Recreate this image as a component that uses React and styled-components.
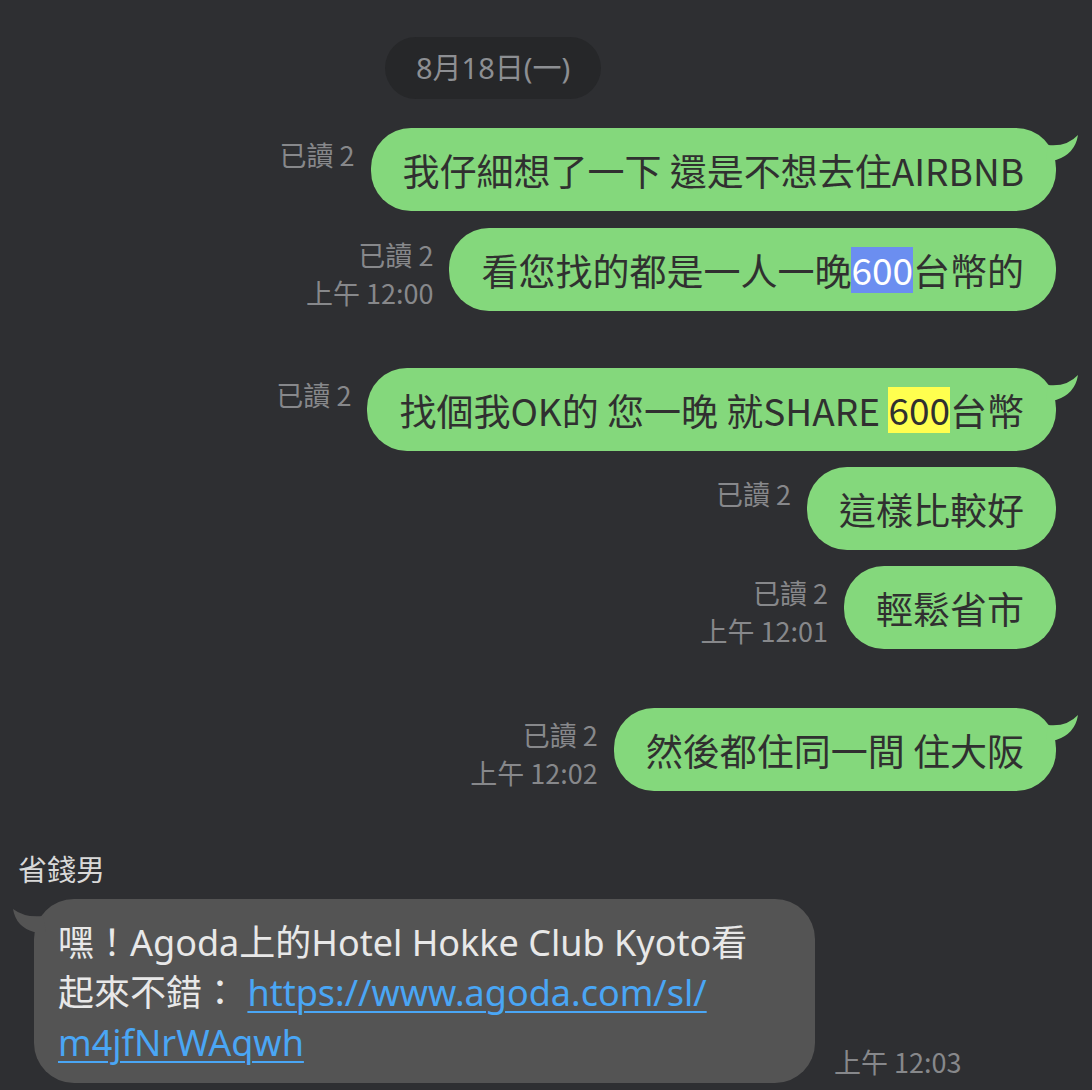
import React from 'react'
import styled, { createGlobalStyle } from 'styled-components'

const cjk = `"Noto Sans CJK TC", "Noto Sans", sans-serif`
const ui = `"Noto Sans", "Noto Sans CJK TC", sans-serif`

const GlobalStyle = createGlobalStyle`
  html, body {
    margin: 0;
    padding: 0;
    background: #2e2f32;
    overflow: hidden;
  }
  * { box-sizing: border-box; }
`

const Chat = styled.div`
  width: 1092px;
  height: 1090px;
  background: #2e2f32;
  padding: 37px 36px 0 0;
  display: flex;
  flex-direction: column;
`

const DatePill = styled.div`
  align-self: flex-start;
  margin-left: 385px;
  height: 62px;
  padding: 0 31px;
  border-radius: 31px;
  background: #262729;
  color: #8d8f93;
  font-family: ${ui};
  font-size: 29px;
  line-height: 62px;
`

const Row = styled.div`
  display: flex;
  justify-content: flex-end;
  align-items: flex-start;
  gap: 16px;
  margin-top: ${(p) => p.$gap}px;
`

const Meta = styled.div`
  margin-top: 8px;
  text-align: right;
  color: #87888b;
  font-family: ${cjk};
  font-size: 27px;
  line-height: 38px;
  white-space: nowrap;
`

const Bubble = styled.div`
  position: relative;
  height: 83px;
  background: #84d87c;
  color: #303030;
  border-radius: 40px;
  padding: 20px 32px;
  font-family: ${cjk};
  font-size: 37px;
  line-height: 44px;
  white-space: nowrap;
`

const Tail = styled.svg`
  position: absolute;
  top: 0;
  ${(p) => (p.$left ? 'left: -22px;' : 'right: -24px;')}
  width: 44px;
  height: 40px;
`

const Mark = styled.span`
  display: inline-block;
  vertical-align: top;
  line-height: 44px;
  height: 46px;
  margin-top: -1px;
  margin-bottom: -1px;
  background: ${(p) => (p.$tone === 'blue' ? '#6b8ef0' : '#ffff4f')};
  color: ${(p) => (p.$tone === 'blue' ? '#ffffff' : '#303030')};
`

const Sender = styled.div`
  margin: 56px 0 0 18px;
  color: #d9d9d9;
  font-family: ${cjk};
  font-size: 29px;
  line-height: 40px;
`

const InRow = styled.div`
  display: flex;
  align-items: flex-end;
  gap: 19px;
  margin: 11px 0 0 34px;
`

const InBubble = styled.div`
  position: relative;
  width: 781px;
  background: #545454;
  color: #e8e8e8;
  border-radius: 40px;
  padding: 19px 24px 15px;
  font-family: ${ui};
  font-size: 36px;
  line-height: 50px;
  white-space: nowrap;
`

const Link = styled.a`
  color: #4aa6f5;
  text-decoration: underline;
  text-underline-offset: 5px;
  text-decoration-thickness: 2px;
`

const InTime = styled(Meta)`
  margin: 0 0 2px;
`

const RightTail = () => (
  <Tail viewBox="0 0 44 40">
    <path d="M12 17 Q31 19 42 7 Q39 26 20 32 L10 32 Z" fill="#84d87c" />
  </Tail>
)

const LeftTail = () => (
  <Tail $left viewBox="0 0 44 40">
    <path d="M31 17 Q13 19 1 10 Q4 28 22 33 L34 33 Z" fill="#545454" />
  </Tail>
)

const messages = [
  { gap: 29, tail: true, meta: ['已讀 2'], text: '我仔細想了一下 還是不想去住AIRBNB' },
  {
    gap: 17,
    meta: ['已讀 2', '上午 12:00'],
    text: (
      <>
        看您找的都是一人一晚<Mark $tone="blue">600</Mark>台幣的
      </>
    ),
  },
  {
    gap: 56,
    tail: true,
    meta: ['已讀 2'],
    text: (
      <>
        找個我OK的 您一晚 就SHARE <Mark $tone="yellow">600</Mark>台幣
      </>
    ),
  },
  { gap: 16, meta: ['已讀 2'], text: '這樣比較好' },
  { gap: 16, meta: ['已讀 2', '上午 12:01'], text: '輕鬆省市' },
  { gap: 58, tail: true, meta: ['已讀 2', '上午 12:02'], text: '然後都住同一間 住大阪' },
]

export default function App() {
  return (
    <>
      <GlobalStyle />
      <Chat>
        <DatePill>8月18日(一)</DatePill>
        {messages.map((m, i) => (
          <Row key={i} $gap={m.gap}>
            <Meta>
              {m.meta.map((line) => (
                <div key={line}>{line}</div>
              ))}
            </Meta>
            <Bubble>
              {m.tail && <RightTail />}
              {m.text}
            </Bubble>
          </Row>
        ))}
        <Sender>省錢男</Sender>
        <InRow>
          <InBubble>
            <LeftTail />
            嘿！Agoda上的Hotel Hokke Club Kyoto看
            <br />
            起來不錯：{' '}
            <Link href="#">
              https://www.agoda.com/sl/
              <br />
              m4jfNrWAqwh
            </Link>
          </InBubble>
          <InTime>上午 12:03</InTime>
        </InRow>
      </Chat>
    </>
  )
}
